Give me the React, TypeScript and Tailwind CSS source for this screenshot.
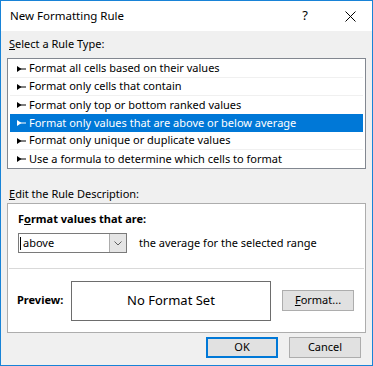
import React from "react";

const rules = [
  "Format all cells based on their values",
  "Format only cells that contain",
  "Format only top or bottom ranked values",
  "Format only values that are above or below average",
  "Format only unique or duplicate values",
  "Use a formula to determine which cells to format",
];

const RuleArrow = ({ active }: { active: boolean }) => (
  <svg width="9" height="6" viewBox="0 0 9 6" className="shrink-0">
    <path d="M0 0 L0 6 L4.5 3 Z" fill={active ? "#fff" : "#000"} />
    <rect x="0" y="2.5" width="9" height="1" fill={active ? "#fff" : "#000"} />
  </svg>
);

const Button = ({ children, primary }: { children: React.ReactNode; primary?: boolean }) => (
  <div
    className={`w-[72px] h-[21px] flex items-center justify-center bg-[#e1e1e1] text-black ${
      primary ? "border-2 border-[#0078d7]" : "border border-[#adadad]"
    }`}
  >
    {children}
  </div>
);

export default function App() {
  return (
    <div
      className="w-[373px] h-[366px] border border-[#1883d7] flex flex-col bg-white text-[11px] text-black"
      style={{ fontFamily: '"Noto Sans", "Open Sans", sans-serif' }}
    >
      {/* Title bar */}
      <div className="h-[30px] flex items-center pl-[9px] pr-[16px] shrink-0 text-[11.5px]">
        <span className="flex-1">New Formatting Rule</span>
        <span className="mr-[37px] text-[13px]">?</span>
        <svg width="11" height="11" viewBox="0 0 11 11">
          <path d="M0.5 0.5 L10.5 10.5 M10.5 0.5 L0.5 10.5" stroke="#000" strokeWidth="1" />
        </svg>
      </div>

      {/* Body */}
      <div className="flex-1 bg-[#f0f0f0] px-[6px] pt-[5px] flex flex-col">
        <div className="leading-[16px] pl-[2px]">
          <u>S</u>elect a Rule Type:
        </div>
        <div className="mt-[6px] h-[111px] border border-[#828790] bg-white px-[2px] pt-[1px]">
          {rules.map((r, i) => {
            const active = i === 3;
            return (
              <div
                key={r}
                className={`h-[18px] flex items-center gap-[3px] pl-[7px] ${
                  active ? "bg-[#0078d7] text-white" : ""
                } ${i < rules.length - 1 && !active && i !== 2 ? "border-b border-[#f0f0f0]" : ""}`}
              >
                <RuleArrow active={active} />
                <span>{r}</span>
              </div>
            );
          })}
        </div>

        <div className="mt-[17px] leading-[16px] pl-[2px]">
          <u>E</u>dit the Rule Description:
        </div>
        <div className="mt-[1px] h-[130px] border border-[#adadad] bg-white flex flex-col">
          <div className="h-[65px] pl-[9px] pt-[7px] mx-[1px] border-b border-[#d9d9d9]">
            <div className="font-bold leading-[16px]">
              F<u>o</u>rmat values that are:
            </div>
            <div className="mt-[6px] flex items-center">
              <div className="w-[109px] h-[20px] border border-[#7a7a7a] flex items-center bg-white">
                <span className="w-px h-[13px] bg-black ml-[1px]" />
                <span className="flex-1 pl-[2px]">above</span>
                <div className="w-[17px] h-[18px] bg-[#e5e5e5] border-l border-[#acacac] flex items-center justify-center">
                  <svg width="8" height="5" viewBox="0 0 8 5">
                    <path d="M0.5 0.5 L4 4 L7.5 0.5" stroke="#606060" fill="none" strokeWidth="1" />
                  </svg>
                </div>
              </div>
              <span className="ml-[12px]">the average for the selected range</span>
            </div>
          </div>
          <div className="flex-1 flex items-center pl-[9px] pr-[11px]">
            <span className="font-bold w-[54px]">Preview:</span>
            <div className="w-[200px] h-[40px] border border-[#6d6d6d] flex items-center justify-center text-[13px]">
              No Format Set
            </div>
            <div className="ml-auto">
              <Button>
                <span>
                  <u>F</u>ormat...
                </span>
              </Button>
            </div>
          </div>
        </div>

        <div className="mt-[4px] flex justify-end gap-[11px] pr-[5px]">
          <Button primary>OK</Button>
          <Button>Cancel</Button>
        </div>
      </div>
    </div>
  );
}
